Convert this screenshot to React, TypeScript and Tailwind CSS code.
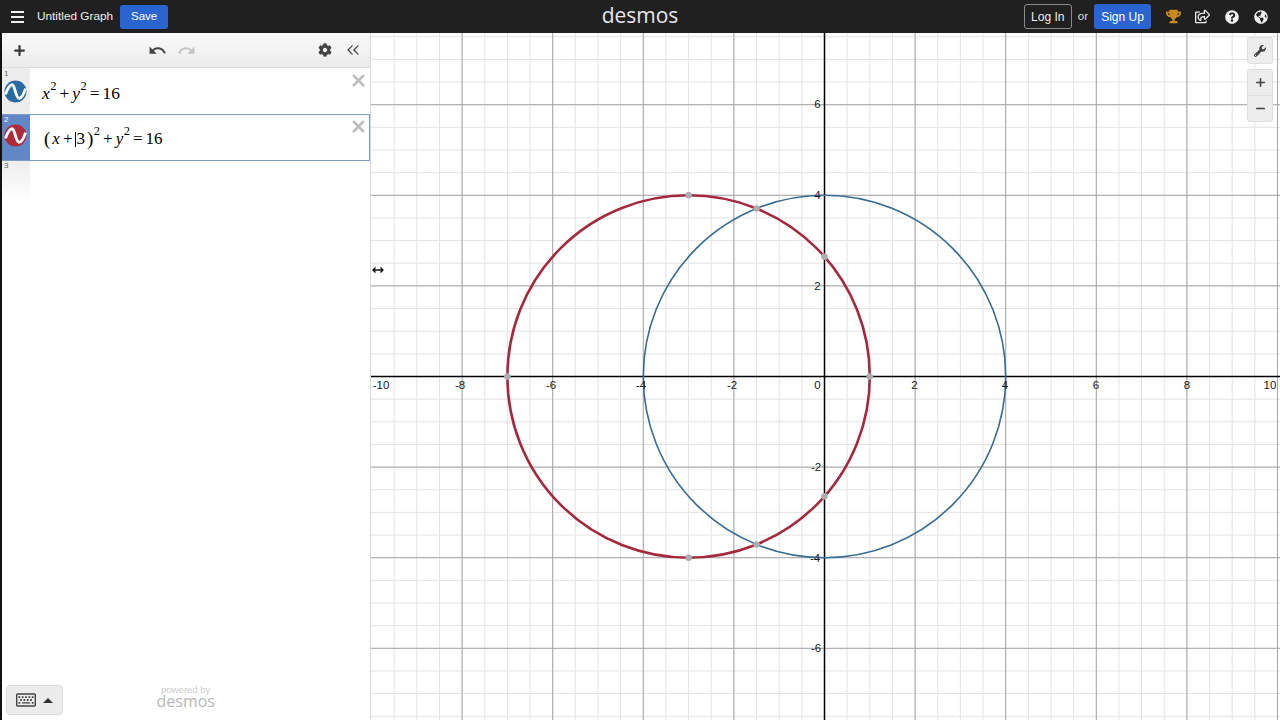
import React from "react";
import { ChevronsLeft, Plus, Minus, X } from "lucide-react";
import { FaCog, FaWrench, FaTrophy, FaQuestionCircle, FaGlobeAmericas, FaRegShareSquare, FaRegKeyboard } from "react-icons/fa";
import { MdUndo, MdRedo } from "react-icons/md";

const U = 45.3;
const OX = 453.5;
const OY = 343.5;
const W = 909;
const H = 687;

function Wave({ color, className }: { color: string; className?: string }) {
  return (
    <svg viewBox="-12 -12 24 24" className={className}>
      <circle cx="0" cy="0" r="11.5" fill={color} />
      <path d="M-10.5 3C-8 -4 -5.5 -7 -3.5 -7C-0.5 -7 0 7 4 7C6 7 8.5 3 10.5 -3" fill="none" stroke="#fff" strokeWidth="3" />
    </svg>
  );
}

function Graph() {
  const minor: number[] = [];
  for (let i = -19; i <= 24; i++) minor.push(i * 0.5);
  const major: number[] = [];
  for (let i = -4; i <= 12; i++) major.push(i * 2);
  const pts: [number, number][] = [
    [-7, 0], [1, 0], [-3, 4], [-3, -4], [0, 2.646], [0, -2.646], [-1.5, 3.708], [-1.5, -3.708],
  ];
  const hs: number[] = [];
  for (let i = -24; i <= 24; i++) hs.push(i * 0.5);
  const hm: number[] = [];
  for (let i = -12; i <= 12; i++) hm.push(i * 2);
  const xl = [
    ["-10", 10], ["-8", 89], ["-6", 180], ["-4", 270], ["-2", 361], ["0", 446.5], ["2", 543.5], ["4", 634], ["6", 725], ["8", 816], ["10", 899],
  ] as [string, number][];
  const yl = [
    ["6", 446.5, 71], ["4", 446.5, 162], ["2", 446.5, 252.5], ["-2", 445, 434], ["-4", 444, 525], ["-6", 445, 615],
  ] as [string, number, number][];
  return (
    <svg viewBox={`0 0 ${W} ${H}`} className="block w-full h-full">
      <g stroke="#e3e3e3" strokeWidth="1">
        {minor.map((v) => (
          <line key={v} x1={OX + v * U} x2={OX + v * U} y1={0} y2={H} />
        ))}
        {hs.map((v) => (
          <line key={v} x1={0} x2={W} y1={OY - v * U} y2={OY - v * U} />
        ))}
      </g>
      <g stroke="#a6a6a6" strokeWidth="1">
        {major.map((v) => (
          <line key={v} x1={OX + v * U} x2={OX + v * U} y1={0} y2={H} />
        ))}
        {hm.map((v) => (
          <line key={v} x1={0} x2={W} y1={OY - v * U} y2={OY - v * U} />
        ))}
      </g>
      <line x1={OX} x2={OX} y1={0} y2={H} stroke="#000" strokeWidth="1.5" />
      <line x1={0} x2={W} y1={OY} y2={OY} stroke="#000" strokeWidth="1.5" />
      <circle cx={OX} cy={OY} r={4 * U} fill="none" stroke="#356b94" strokeWidth="1.6" />
      <circle cx={OX - 3 * U} cy={OY} r={4 * U} fill="none" stroke="#a5283d" strokeWidth="2.6" />
      {pts.map(([x, y]) => (
        <circle key={`${x}${y}`} cx={OX + x * U} cy={OY - y * U} r="3.3" fill="#adadad" />
      ))}
      <g fontFamily="'Liberation Sans', sans-serif" fontSize="11.5" fill="#1a1a1a" textAnchor="middle">
        {xl.map(([t, x]) => (
          <text key={t} x={x} y={355.5}>{t}</text>
        ))}
        {yl.map(([t, x, y]) => (
          <text key={t} x={x} y={y + 4}>{t}</text>
        ))}
      </g>
    </svg>
  );
}

function Sup({ children }: { children: React.ReactNode }) {
  return <sup className="text-[12.5px] not-italic -top-[8px] ml-[0.5px]">{children}</sup>;
}

function Row({ n, active, color, children }: { n: number; active?: boolean; color: string; children: React.ReactNode }) {
  return (
    <div className={active ? "flex h-[47px] border-y border-r border-[#7d9cc4]" : "flex h-[46px]"}>
      <div className={active ? "relative w-[28px] bg-[#6187c6] shrink-0 flex items-center justify-center pb-[4px] pr-[1px]" : "relative w-[28px] bg-[#ededed] shrink-0 flex items-center justify-center pr-[1px]"}>
        <span className={active ? "absolute left-[2px] top-[0px] text-[8px] leading-[10px] text-white" : "absolute left-[2px] top-[1px] text-[8px] leading-[10px] text-[#666]"}>{n}</span>
        <Wave color={color} className="w-[23px] h-[23px]" />
      </div>
      <div className={active ? "relative flex-1 bg-white flex items-center pl-[12px] pt-[3px] font-['Liberation_Serif',serif] text-[17px] text-black" : "relative flex-1 bg-white flex items-center pl-[12px] pt-[5px] font-['Liberation_Serif',serif] text-[17.4px] text-black"}>
        {children}
        <X className={active ? "absolute right-[1px] top-[2px] w-[19px] h-[19px] text-[#bdbdbd]" : "absolute right-[2px] top-[3px] w-[19px] h-[19px] text-[#bdbdbd]"} strokeWidth={3.2} />
      </div>
    </div>
  );
}

export default function App() {
  return (
    <div className="flex flex-col w-[1280px] h-[720px] overflow-hidden bg-white font-['Liberation_Sans',sans-serif]">
      <header className="grid grid-cols-[1fr_auto_1fr] items-center h-[33px] shrink-0 bg-[#202020] text-white">
        <div className="flex items-center">
          <div className="flex flex-col gap-[3px] ml-[11px] w-[13px]">
            <div className="h-[2px] bg-[#eeeeee]" />
            <div className="h-[2px] bg-[#eeeeee]" />
            <div className="h-[2px] bg-[#eeeeee]" />
          </div>
          <span className="ml-[13px] text-[11.8px] text-[#eeeeee]">Untitled Graph</span>
          <button className="ml-[7px] w-[48px] h-[24px] rounded-[3px] bg-[#2a64d0] text-[11.5px]">Save</button>
        </div>
        <span className="font-['Open_Sans',sans-serif] font-normal text-[21px] leading-[28px] -mt-[4px] text-[#e6e6e6]">desmos</span>
        <div className="flex items-center justify-end">
          <button className="w-[48px] h-[25px] rounded-[3px] border border-[#8a8a8a] text-[12px] text-[#eeeeee]">Log In</button>
          <span className="mx-[6px] text-[11.5px] text-[#dddddd]">or</span>
          <button className="w-[57px] h-[25px] rounded-[3px] bg-[#2a64d0] text-[12px]">Sign Up</button>
          <FaTrophy className="ml-[15px] w-[15px] h-[15px] text-[#c98a1e]" />
          <FaRegShareSquare className="ml-[14px] w-[15px] h-[15px] text-[#eeeeee]" />
          <FaQuestionCircle className="ml-[15px] w-[14px] h-[14px] text-[#f2f2f2]" />
          <FaGlobeAmericas className="ml-[15px] w-[14px] h-[14px] text-[#eeeeee] mr-[12px]" />
        </div>
      </header>
      <div className="flex flex-1 min-h-0">
        <div className="w-[2px] bg-[#111] shrink-0" />
        <aside className="flex flex-col w-[369px] shrink-0 bg-white border-r border-[#d8d8d8]">
          <div className="flex items-center h-[35px] shrink-0 bg-gradient-to-b from-[#fafafa] to-[#ebebeb] border-b border-[#dcdcdc]">
            <Plus className="ml-[10px] w-[15px] h-[15px] text-[#3a3a3a]" strokeWidth={3.6} />
            <MdUndo className="ml-[121px] w-[19px] h-[19px] text-[#444]" />
            <MdRedo className="ml-[10px] w-[19px] h-[19px] text-[#c4c4c4]" />
            <FaCog className="ml-[122px] w-[14px] h-[14px] text-[#444]" />
            <ChevronsLeft className="ml-[11px] w-[20px] h-[20px] text-[#444]" strokeWidth={1.5} />
          </div>
          <Row n={1} color="#2a6aa3">
            <span className="italic">x</span><Sup>2</Sup>
            <span className="mx-[3px]">+</span>
            <span className="italic">y</span><Sup>2</Sup>
            <span className="mx-[3px]">=</span>16
          </Row>
          <Row n={2} active color="#b02a3a">
            <span className="text-[19px] ml-[2px] mr-[2px]">(</span>
            <span className="italic">x</span>
            <span className="mx-[3px]">+</span>
            <span className="w-px h-[15px] bg-black" />3
            <span className="text-[19px] ml-[2px]">)</span><Sup>2</Sup>
            <span className="mx-[3px]">+</span>
            <span className="italic">y</span><Sup>2</Sup>
            <span className="mx-[3px]">=</span>16
          </Row>
          <div className="flex h-[40px]">
            <div className="relative w-[28px] bg-gradient-to-b from-[#ededed] to-white">
              <span className="absolute left-[2px] top-[0px] text-[8px] leading-[10px] text-[#666]">3</span>
            </div>
          </div>
          <div className="flex-1 flex items-end justify-between pl-[4px] pb-[5px]">
            <div className="flex items-center justify-center gap-[7px] w-[57px] h-[30px] rounded-[4px] bg-[#ececec] border border-[#dddddd]">
              <FaRegKeyboard className="w-[20px] h-[20px] text-[#444]" />
              <div className="w-0 h-0 border-x-[5px] border-x-transparent border-b-[5px] border-b-[#333]" />
            </div>
            <div className="flex flex-col items-center mr-[155px] text-[#b8b8b8] mb-[8px]">
              <span className="text-[9.5px] leading-[10px] text-[#cccccc]">powered by</span>
              <span className="font-['Open_Sans',sans-serif] text-[16px] leading-[12px]">desmos</span>
            </div>
          </div>
        </aside>
        <main className="relative flex-1 min-w-0">
          <Graph />
          <svg viewBox="0 0 12 8" className="absolute left-[1px] top-[233px] w-[12px] h-[8px]">
            <path d="M1 4H11M3.5 1.5L1 4L3.5 6.5M8.5 1.5L11 4L8.5 6.5" fill="none" stroke="#111" strokeWidth="1.4" />
          </svg>
          <div className="absolute right-[7px] top-[4px] flex flex-col gap-[5px] text-[#444]">
            <div className="flex items-center justify-center w-[26px] h-[27px] rounded-[3px] bg-[#ededed] border border-[#dedede]">
              <FaWrench className="w-[12px] h-[12px]" />
            </div>
            <div className="flex flex-col w-[26px] h-[53px] rounded-[3px] bg-[#ededed] border border-[#dedede]">
              <div className="flex-1 flex items-center justify-center border-b border-[#dedede]">
                <Plus className="w-[13px] h-[13px]" strokeWidth={3} />
              </div>
              <div className="flex-1 flex items-center justify-center">
                <Minus className="w-[13px] h-[13px]" strokeWidth={3} />
              </div>
            </div>
          </div>
        </main>
      </div>
    </div>
  );
}
